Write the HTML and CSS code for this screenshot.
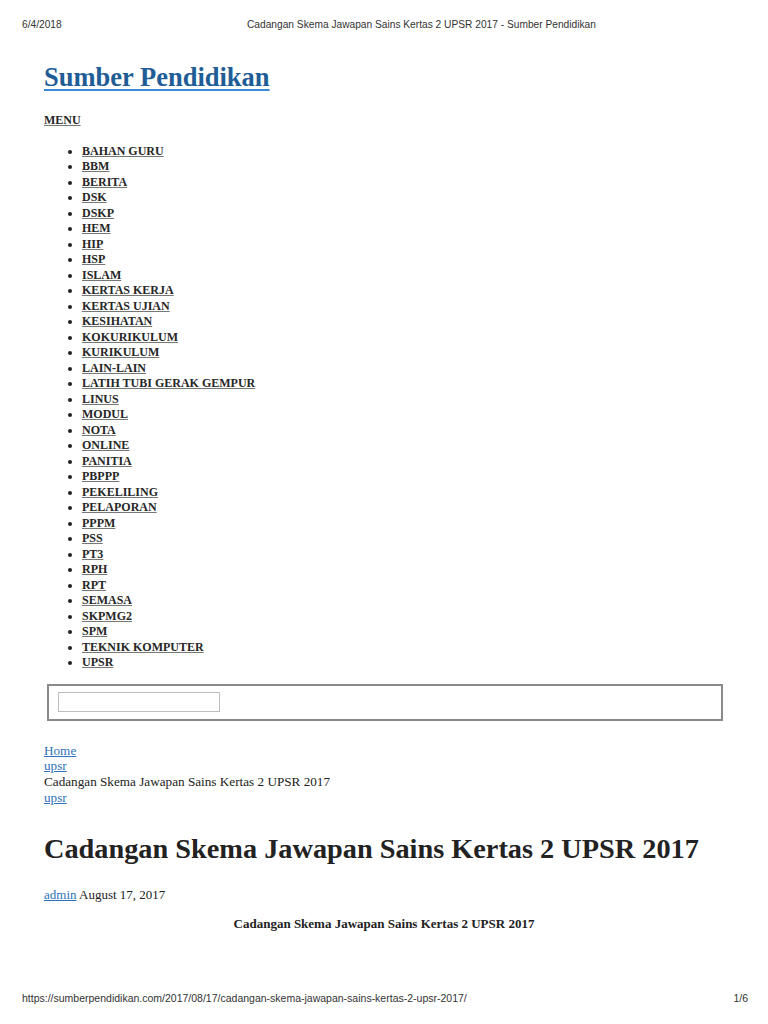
FILE: index.html
```html
<!DOCTYPE html>
<html>
<head>
<meta charset="utf-8">
<title>Cadangan Skema Jawapan Sains Kertas 2 UPSR 2017 - Sumber Pendidikan</title>
<link rel="stylesheet" href="styles.css">
</head>
<body>
<div class="page">
  <header class="print-head">
    <span class="print-date">6/4/2018</span>
    <span class="print-title">Cadangan Skema Jawapan Sains Kertas 2 UPSR 2017 - Sumber Pendidikan</span>
  </header>

  <main class="content">
    <div class="site-title"><a href="#">Sumber Pendidikan</a></div>

    <nav class="menu">
      <div class="menu-label"><a href="#">MENU</a></div>
      <ul class="menu-list">
        <li><a href="#">BAHAN GURU</a></li>
        <li><a href="#">BBM</a></li>
        <li><a href="#">BERITA</a></li>
        <li><a href="#">DSK</a></li>
        <li><a href="#">DSKP</a></li>
        <li><a href="#">HEM</a></li>
        <li><a href="#">HIP</a></li>
        <li><a href="#">HSP</a></li>
        <li><a href="#">ISLAM</a></li>
        <li><a href="#">KERTAS KERJA</a></li>
        <li><a href="#">KERTAS UJIAN</a></li>
        <li><a href="#">KESIHATAN</a></li>
        <li><a href="#">KOKURIKULUM</a></li>
        <li><a href="#">KURIKULUM</a></li>
        <li><a href="#">LAIN-LAIN</a></li>
        <li><a href="#">LATIH TUBI GERAK GEMPUR</a></li>
        <li><a href="#">LINUS</a></li>
        <li><a href="#">MODUL</a></li>
        <li><a href="#">NOTA</a></li>
        <li><a href="#">ONLINE</a></li>
        <li><a href="#">PANITIA</a></li>
        <li><a href="#">PBPPP</a></li>
        <li><a href="#">PEKELILING</a></li>
        <li><a href="#">PELAPORAN</a></li>
        <li><a href="#">PPPM</a></li>
        <li><a href="#">PSS</a></li>
        <li><a href="#">PT3</a></li>
        <li><a href="#">RPH</a></li>
        <li><a href="#">RPT</a></li>
        <li><a href="#">SEMASA</a></li>
        <li><a href="#">SKPMG2</a></li>
        <li><a href="#">SPM</a></li>
        <li><a href="#">TEKNIK KOMPUTER</a></li>
        <li><a href="#">UPSR</a></li>
      </ul>
    </nav>

    <div class="search-box">
      <div class="search-input"></div>
    </div>

    <div class="breadcrumb">
      <a href="#">Home</a>
      <a href="#">upsr</a>
      <span>Cadangan Skema Jawapan Sains Kertas 2 UPSR 2017</span>
      <a href="#">upsr</a>
    </div>

    <h1 class="post-title">Cadangan Skema Jawapan Sains Kertas 2 UPSR 2017</h1>

    <div class="post-meta"><a href="#">admin</a> August 17, 2017</div>

    <p class="post-lead">Cadangan Skema Jawapan Sains Kertas 2 UPSR 2017</p>
  </main>

  <footer class="print-foot">
    <span class="print-url">https://sumberpendidikan.com/2017/08/17/cadangan-skema-jawapan-sains-kertas-2-upsr-2017/</span>
    <span class="print-page">1/6</span>
  </footer>
</div>
</body>
</html>
```

FILE: styles.css
```css
html, body {
  margin: 0;
  padding: 0;
  background: #ffffff;
}

.page {
  width: 768px;
  height: 1024px;
  display: flex;
  flex-direction: column;
  font-family: "Liberation Serif", "Times New Roman", serif;
  color: #222222;
}

.print-head {
  display: flex;
  align-items: center;
  height: 12px;
  margin-top: 18px;
  padding: 0 22px;
  font-family: "Liberation Sans", Arial, sans-serif;
  font-size: 10.2px;
  color: #333333;
}

.print-date {
  width: 225px;
}

.content {
  flex: 1;
  padding: 0 44px;
  display: flex;
  flex-direction: column;
}

.site-title {
  margin-top: 32px;
  font-size: 26.5px;
  font-weight: bold;
  line-height: 30px;
}

.site-title a {
  color: #1f5d96;
  text-decoration: underline;
  text-decoration-color: #3a8ad8;
  text-decoration-thickness: 2px;
  text-underline-offset: 3px;
}

.menu {
  margin-top: 20px;
}

.menu-label {
  font-size: 12px;
  font-weight: bold;
  line-height: 16px;
}

.menu-label a,
.menu-list a {
  color: #262626;
  text-decoration: underline;
  text-decoration-color: #777777;
}

.menu-list {
  margin: 15.5px 0 0 0;
  padding: 0 0 0 38px;
  font-size: 12px;
  font-weight: bold;
  line-height: 15.5px;
}

.search-box {
  box-sizing: border-box;
  margin-top: 13px;
  margin-left: 3px;
  width: 676px;
  height: 37px;
  border: 2px solid #8a8a8a;
  display: flex;
  align-items: center;
  padding-left: 9px;
}

.search-input {
  width: 160px;
  height: 18px;
  border: 1px solid #bdbdbd;
}

.breadcrumb {
  margin-top: 22px;
  display: flex;
  flex-direction: column;
  font-size: 13.2px;
  line-height: 15.7px;
}

.breadcrumb a {
  color: #2e72b8;
  text-decoration: underline;
  align-self: flex-start;
}

.breadcrumb span {
  color: #222222;
}

.post-title {
  margin: 27px 0 0 0;
  font-size: 28.3px;
  line-height: 34px;
  font-weight: bold;
  color: #222222;
}

.post-meta {
  margin-top: 21px;
  font-size: 13px;
  line-height: 16px;
}

.post-meta a {
  color: #2e72b8;
  text-decoration: underline;
}

.post-lead {
  margin: 13px 0 0 0;
  text-align: center;
  font-size: 13px;
  font-weight: bold;
  line-height: 16px;
}

.print-foot {
  display: flex;
  justify-content: space-between;
  align-items: center;
  height: 12px;
  margin-bottom: 20px;
  padding: 0 20px 0 22px;
  font-family: "Liberation Sans", Arial, sans-serif;
  font-size: 10.5px;
  color: #333333;
}
```
